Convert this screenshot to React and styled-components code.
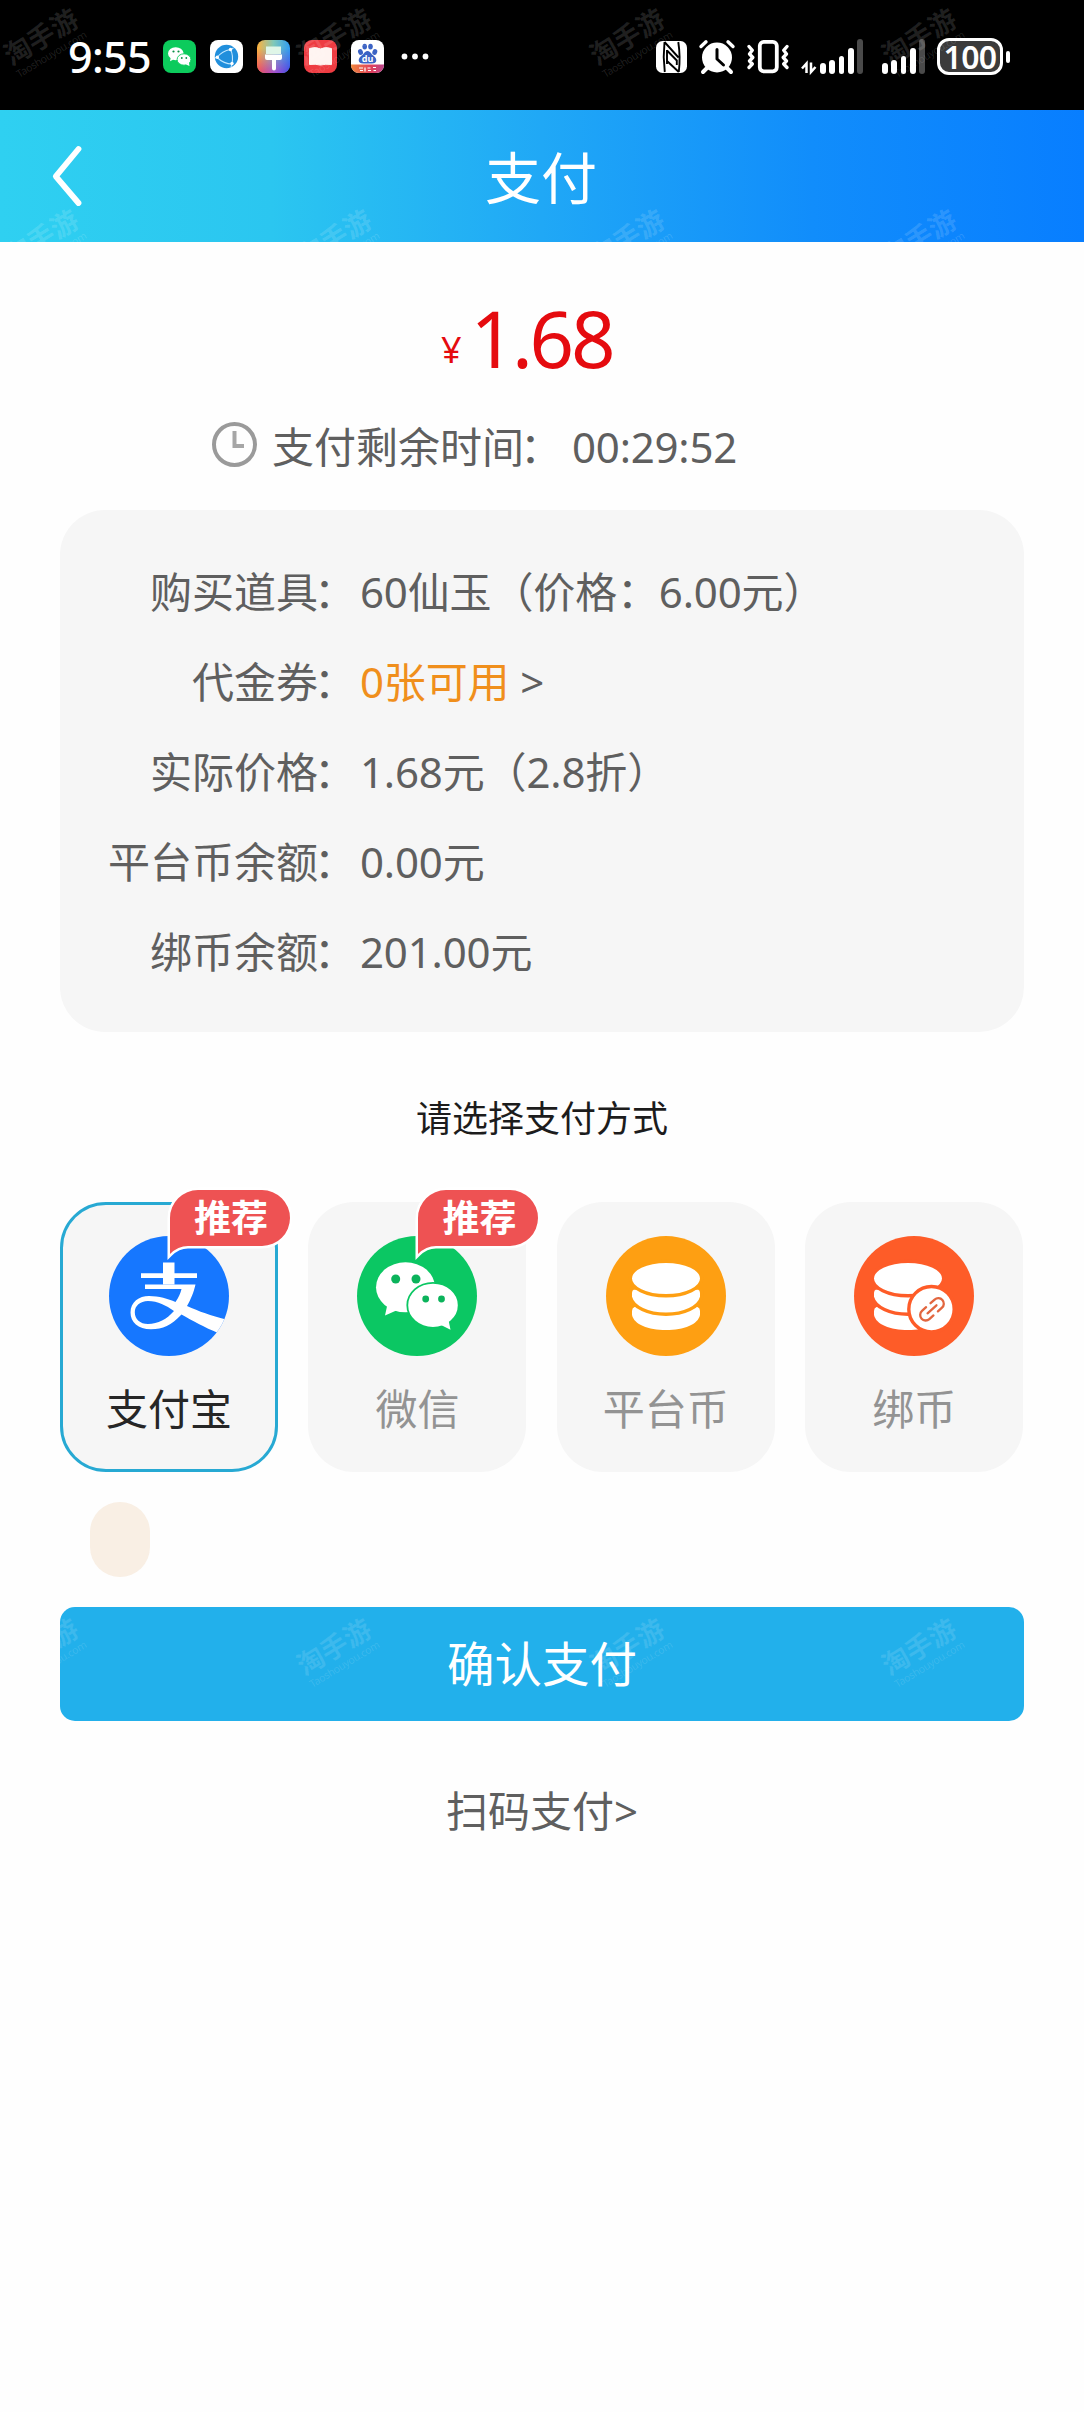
import React from 'react';
import styled, { createGlobalStyle } from 'styled-components';

const GlobalStyle = createGlobalStyle`
  *, *::before, *::after { box-sizing: border-box; }
  body { margin: 0; background: #fefefe; }
`;

const Page = styled.div`
  position: relative;
  width: 1084px;
  height: 2412px;
  overflow: hidden;
  background: #fefefe;
  font-family: 'Noto Sans', 'Noto Sans CJK SC', sans-serif;
  color: #5f5f5f;
`;

/* ---------- status bar ---------- */

const StatusBar = styled.header`
  display: flex;
  align-items: center;
  justify-content: space-between;
  height: 110px;
  padding: 3px 74px 0 68px;
  background: #000;
  color: #fff;
`;

const StatusGroup = styled.div`
  display: flex;
  align-items: center;
`;

const Time = styled.span`
  width: 95px;
  font-size: 43px;
  line-height: 50px;
  font-weight: 500;
  letter-spacing: -0.6px;
`;

const AppIcons = styled.div`
  display: flex;
  gap: 14px;
  margin-right: 17px;
`;

const Glyph = styled.svg`
  display: block;
  flex: none;
  width: ${(p) => p.$w}px;
  height: ${(p) => p.$h}px;
  margin-left: ${(p) => p.$ml || 0}px;
  overflow: visible;
`;

const Bars = styled.div`
  display: flex;
  align-items: flex-end;
  gap: 3.4px;
  height: 35px;
  margin-left: ${(p) => p.$ml}px;
`;

const Bar = styled.i`
  width: 5.9px;
  height: ${(p) => p.$h}px;
  border-radius: 3px;
  background: ${(p) => (p.$dim ? '#4a4a4a' : '#fff')};
`;

const Battery = styled.div`
  display: flex;
  align-items: center;
  justify-content: center;
  width: 66px;
  height: 37px;
  margin-left: 12px;
  border: 3px solid #fff;
  border-radius: 12px;
  background: #3b3b3b;
  font-size: 32px;
  line-height: 31px;
  font-weight: 600;
  letter-spacing: -0.6px;
`;

const BatteryTip = styled.i`
  width: 4px;
  height: 12px;
  margin-left: 3px;
  border-radius: 2px;
  background: #fff;
`;

/* ---------- title bar ---------- */

const TitleBar = styled.div`
  display: grid;
  grid-template-columns: 120px 1fr 120px;
  align-items: center;
  height: 132px;
  background: linear-gradient(90deg, #2fd0f1 0%, #2bc6f0 25%, #20a8f6 50%, #118dfb 75%, #087eff 100%);
`;

const Title = styled.h1`
  margin: 0 2px 0 0;
  text-align: center;
  color: #fff;
  font-size: 56px;
  line-height: 80px;
  font-weight: 400;
  padding-top: 1px;
`;

/* ---------- content ---------- */

const Content = styled.main`
  display: flex;
  flex-direction: column;
  padding: 46px 60px 0;
`;

const Price = styled.div`
  display: flex;
  align-items: flex-end;
  height: 100px;
  padding-left: 381px;
  color: #e50b0f;
`;

const Currency = styled.span`
  width: 29.5px;
  font-size: 36px;
  line-height: 76px;
`;

const Amount = styled.span`
  font-size: 78px;
  line-height: 100px;
  letter-spacing: -3.2px;
`;

const Countdown = styled.div`
  display: flex;
  align-items: center;
  height: 60px;
  margin-top: 29px;
  padding-left: 152px;
  font-size: 42px;
  line-height: 60px;
`;

const CountdownLabel = styled.span`
  margin-left: 14px;
  width: 300px;
`;

const CountdownValue = styled.span`
  letter-spacing: -0.2px;
`;

const Colon = styled.span`
  margin: 0 4px 0 -4px;
`;

const Details = styled.dl`
  margin: 33px 0 0;
  height: 522px;
  padding: 37px 0 0;
  border-radius: 45px;
  background: #f6f6f6;
`;

const DetailRow = styled.div`
  display: grid;
  grid-template-columns: 300px 1fr;
  height: 90px;
  font-size: 42px;
  line-height: 89px;
`;

const DetailLabel = styled.dt`
  text-align: right;
  white-space: nowrap;
`;

const DetailValue = styled.dd`
  margin: 0;
  letter-spacing: -0.15px;
`;

const Coupon = styled.span`
  color: #f08f1c;
`;

const SectionTitle = styled.h2`
  margin: 57px 0 53px;
  text-align: center;
  color: #1c1c1c;
  font-size: 36px;
  line-height: 60px;
  font-weight: 400;
`;

const Methods = styled.div`
  display: grid;
  grid-template-columns: repeat(4, 218px);
  column-gap: 30.4px;
`;

const Method = styled.button`
  position: relative;
  display: flex;
  flex-direction: column;
  align-items: center;
  height: 270px;
  padding: ${(p) => (p.$active ? '31px' : '34px')} 0 0;
  border: ${(p) => (p.$active ? '3px solid #27a9d3' : '0')};
  border-radius: 46px;
  background: #f6f6f6;
  color: ${(p) => (p.$active ? '#262626' : '#939393')};
  font-family: inherit;
  font-size: 42px;
  line-height: 60px;
`;

const MethodName = styled.span`
  margin-top: 23px;
`;

const Badge = styled.span`
  position: absolute;
  left: ${(p) => (p.$active ? 107 : 110)}px;
  top: ${(p) => (p.$active ? -15 : -12)}px;
  width: 120px;
  height: 56px;
  padding-left: 2px;
  text-align: center;
  color: #fff;
  font-size: 37px;
  line-height: 55px;
  font-weight: 700;
`;

const BadgeShape = styled.svg`
  position: absolute;
  left: 0;
  top: 0;
  width: 120px;
  height: 64px;
  overflow: visible;
`;

const BadgeText = styled.span`
  position: relative;
`;

const Dot = styled.div`
  width: 60px;
  height: 75px;
  margin: 30px 0 30px 30px;
  border-radius: 30px;
  background: #f9efe4;
`;

const Confirm = styled.button`
  height: 114px;
  padding: 0;
  border: 0;
  border-radius: 15px;
  background: #22b0eb;
  color: #fff;
  font-family: inherit;
  font-size: 47.5px;
  line-height: 114px;
`;

const ScanLink = styled.a`
  margin-top: 60px;
  text-align: center;
  font-size: 42px;
  line-height: 60px;
`;

/* ---------- watermark overlay ---------- */

const Mark = styled.div`
  position: absolute;
  left: ${(p) => p.$x}px;
  top: ${(p) => p.$y}px;
  width: 84px;
  transform: rotate(-31deg);
  color: rgba(255, 255, 255, ${(p) => p.$o});
  text-align: center;
  white-space: nowrap;
  pointer-events: none;
`;

const MarkName = styled.div`
  font-size: 27px;
  line-height: 29px;
  font-weight: 700;
`;

const MarkSite = styled.div`
  font-size: 10.5px;
  line-height: 13px;
  letter-spacing: -0.3px;
`;

const WATERMARK_ROWS = [
  { y: 21, o: 0.13 },
  { y: 222, o: 0.14 },
  { y: 1631, o: 0.12 },
];
const WATERMARK_COLS = [2, 295, 588, 880];

/* ---------- drawings ---------- */

const ChatApp = () => (
  <Glyph $w={33} $h={33} viewBox="0 0 33 33">
    <rect width="33" height="33" rx="8" fill="#0ccb5c" />
    <path d="M5 13.5a7.8 6.5 0 1 1 9 6.6q-2.500.2-4-.4L7 21.300l.6-3Q5 16.500 5 13.500z" fill="#fff" />
    <ellipse cx="21" cy="19.500" rx="6.900" ry="5.700" fill="#fff" stroke="#0ccb5c" strokeWidth=".9" />
    <path d="M23 24.500l3.500 1.500-.6-3.500z" fill="#fff" />
    <g fill="#0b8f45"><circle cx="10.500" cy="11.500" r="1.100" /><circle cx="15.500" cy="11.500" r="1.100" /><circle cx="18.800" cy="18" r=".9" /><circle cx="23.300" cy="18" r=".9" /></g>
  </Glyph>
);

const BrowserApp = () => (
  <Glyph $w={33} $h={33} viewBox="0 0 33 33">
    <rect width="33" height="33" rx="8" fill="#fff" />
    <circle cx="16.500" cy="16.500" r="11.700" fill="#218fdc" />
    <path d="M7 17.500Q12 11 20.500 9.500Q23.500 15 22 24Q14 24 7 17.500M20.500 9.500l3-1.500M22 24l-1 3M7 17.500l-2 .5" fill="none" stroke="#bfe6ff" strokeWidth="1.100" />
    <g fill="#fff"><circle cx="7.300" cy="17.300" r="1.700" /><circle cx="20.500" cy="9.500" r="1.700" /><circle cx="22" cy="23.500" r="1.700" /></g>
  </Glyph>
);

const ThemeApp = () => (
  <Glyph $w={33} $h={33} viewBox="0 0 33 33">
    <defs>
      <linearGradient id="themeA" x1="0" y1="0" x2="1" y2="0">
        <stop offset="0" stopColor="#ffb13c" /><stop offset=".5" stopColor="#7fc9b9" /><stop offset="1" stopColor="#2f9cf2" />
      </linearGradient>
      <linearGradient id="themeB" x1="0" y1="0" x2="1" y2="0">
        <stop offset="0" stopColor="#f5485a" /><stop offset=".55" stopColor="#a24fd0" /><stop offset="1" stopColor="#4a45e6" />
      </linearGradient>
      <linearGradient id="themeFade" x1="0" y1="0" x2="0" y2="1">
        <stop offset=".25" stopColor="#000" /><stop offset="1" stopColor="#fff" />
      </linearGradient>
      <mask id="themeMask"><rect width="33" height="33" fill="url(#themeFade)" /></mask>
    </defs>
    <rect width="33" height="33" rx="8" fill="url(#themeA)" />
    <rect width="33" height="33" rx="8" fill="url(#themeB)" mask="url(#themeMask)" />
    <path d="M9 6.500h15v7.500H9z" fill="#dff6e8" />
    <path d="M8 14.500h17v3.500q0 2-2 2h-4v8.500a2 2 0 0 1-4 0V20h-5q-2 0-2-2z" fill="#fff" />
  </Glyph>
);

const ReaderApp = () => (
  <Glyph $w={33} $h={33} viewBox="0 0 33 33">
    <rect width="33" height="33" rx="8" fill="#ee3c42" />
    <path d="M5.500 8.500q6-2 11 .4q5-2.400 11-.4v16q-6-.8-11 .6q-5-1.400-11-.6z" fill="#fff4f1" stroke="#fff4f1" strokeWidth="1" strokeLinejoin="round" />
  </Glyph>
);

const SearchApp = () => (
  <Glyph $w={33} $h={33} viewBox="0 0 33 33">
    <defs>
      <clipPath id="searchClip"><rect width="33" height="33" rx="8" /></clipPath>
      <linearGradient id="searchBand"><stop offset="0" stopColor="#f0873e" /><stop offset=".6" stopColor="#e0405a" /><stop offset="1" stopColor="#bb448d" /></linearGradient>
    </defs>
    <g clipPath="url(#searchClip)">
      <rect width="33" height="33" fill="#fff" />
      <rect y="24.500" width="33" height="8.500" fill="url(#searchBand)" />
    </g>
    <g fill="#3b63c4">
      <ellipse cx="9.500" cy="12" rx="2.400" ry="3" transform="rotate(-20 9.500 12)" />
      <ellipse cx="13.700" cy="6.600" rx="2.300" ry="2.900" />
      <ellipse cx="19.500" cy="6.600" rx="2.300" ry="2.900" />
      <ellipse cx="23.800" cy="12" rx="2.400" ry="3" transform="rotate(20 23.800 12)" />
      <path d="M16.500 11q2.500 0 4.500 3.500q4.500 3 4.300 6q-.3 3-4.500 3h-8.600q-4.200 0-4.500-3q-.2-3 4.300-6q2-3.500 4.500-3.500z" />
    </g>
    <text x="16.500" y="22" fill="#fff" fontSize="9" fontWeight="700" textAnchor="middle">du</text>
    <path d="M8 28h4M9 30.500h3M14 27.500v4M16.500 28h3M17 30.500h3M22 27.500h3M22.500 30.500h2.500" stroke="#fff" strokeWidth="1.200" />
  </Glyph>
);

const More = () => (
  <Glyph $w={28} $h={8} viewBox="0 0 28 8">
    <g fill="#fff"><circle cx="3.500" cy="3.500" r="2.900" /><circle cx="14" cy="3.500" r="2.900" /><circle cx="24.500" cy="3.500" r="2.900" /></g>
  </Glyph>
);

const Nfc = () => (
  <Glyph $w={31} $h={32} viewBox="0 0 31 32">
    <rect width="31" height="32" rx="6.500" fill="#fff" />
    <path d="M8.500 1Q6.800 16 8.800 31M8.500 1L22.500 16.500M22.300 1Q24.600 16 22.800 31M22.800 31L10.500 19.500M11 9v14M11 9.500L20.800 19.500V24" fill="none" stroke="#000" strokeWidth="1.900" />
  </Glyph>
);

const Alarm = () => (
  <Glyph $w={36} $h={33} $ml={12} viewBox="0 0 36 33">
    <circle cx="18" cy="17.500" r="15" fill="#fff" />
    <path d="M8 28l-4 4M28 28l4 4" stroke="#fff" strokeWidth="4" strokeLinecap="round" />
    <path d="M2 6.500L7 1.800M34 6.500L29 1.800" stroke="#fff" strokeWidth="3.400" strokeLinecap="round" />
    <path d="M18 9.500v9.500l6.500 6" fill="none" stroke="#000" strokeWidth="3" strokeLinecap="round" strokeLinejoin="round" />
  </Glyph>
);

const Vibrate = () => (
  <Glyph $w={42} $h={33} $ml={12} viewBox="0 0 42 33">
    <rect x="12.800" y="1.800" width="17" height="29.500" rx="4" fill="none" stroke="#fff" strokeWidth="3.800" />
    <path d="M2 6.500l3.300 3.800L2.500 14l3.300 3.500L2.500 21l2.800 3L2 27.500M40 6.500l-3.300 3.800 2.800 3.700-3.300 3.500 3.300 3.500-2.800 3 3.300 3.500" fill="none" stroke="#fff" strokeWidth="3.300" strokeLinecap="round" strokeLinejoin="round" />
  </Glyph>
);

const DataArrows = () => (
  <Glyph $w={16} $h={35} $ml={12} viewBox="0 0 16 35">
    <path d="M5.500 34V24.500L1 29.500M10 23.500V33l4.500-5" fill="none" stroke="#fff" strokeWidth="2.500" />
  </Glyph>
);

const Signal = ({ ml }) => (
  <Bars $ml={ml}>
    {[11, 14.5, 18.5, 26].map((h) => <Bar key={h} $h={h} />)}
    <Bar $h={35} $dim />
  </Bars>
);

const BackIcon = () => (
  <Glyph $w={28} $h={60} $ml={52} viewBox="0 0 28 60">
    <path d="M26.500 3L3.800 30.300L26.500 57" fill="none" stroke="#fff" strokeWidth="5.800" strokeLinecap="round" strokeLinejoin="round" />
  </Glyph>
);

const ClockIcon = () => (
  <Glyph $w={46} $h={50} viewBox="0 0 46 50">
    <circle cx="22.500" cy="22.500" r="20.500" fill="none" stroke="#9a9a9a" strokeWidth="4" />
    <path d="M22.500 9v15h9.500" fill="none" stroke="#a6a6a6" strokeWidth="4" />
  </Glyph>
);

const AlipayIcon = () => (
  <Glyph $w={120} $h={120} viewBox="0 0 120 120">
    <defs><clipPath id="aliClip"><circle cx="60" cy="60" r="60" /></clipPath></defs>
    <circle cx="60" cy="60" r="60" fill="#1677ff" />
    <g fill="#fff" clipPath="url(#aliClip)">
      <path d="M54 26.500h11.500V37.300H88v4.700H65.500v6.500H54V42H32v-4.700h22z" />
      <path fillRule="evenodd" d="M36 48.500H86.500C84.500 57 82 63 78 70C90 75.500 102 79.500 117 83.500L109 97C96 91.500 83 84.500 72.500 78.500C62 89.500 54 93.300 42 93.300C29 93.300 21.500 86 21.500 76.500C21.500 66 30 60 40 60C50 60 59 62.800 66.500 66C69.500 62 71.500 57 72.500 53H36ZM65 75C57 69.500 49 65 39 65C31 65 25.800 70 25.800 76.200C25.800 83 31 88 39 88C49 88 58 83 65 75Z" />
    </g>
  </Glyph>
);

const WechatIcon = () => (
  <Glyph $w={120} $h={120} viewBox="0 0 120 120">
    <circle cx="60" cy="60" r="60" fill="#0bc763" />
    <ellipse cx="48.500" cy="51.300" rx="29.500" ry="25" fill="#fff" />
    <path d="M30.500 68L28 79.500L40.500 74z" fill="#fff" />
    <ellipse cx="76" cy="69.300" rx="25.700" ry="22.500" fill="#fff" stroke="#0bc763" strokeWidth="1.800" />
    <path d="M84 89L93.500 93.800L91.500 84z" fill="#fff" />
    <g fill="#0bb35b">
      <circle cx="38.700" cy="43" r="4.500" /><circle cx="59" cy="43" r="4.500" />
      <circle cx="68.700" cy="63" r="3.400" /><circle cx="84.500" cy="63" r="3.400" />
    </g>
  </Glyph>
);

const CoinStack = ({ x, gap }) => (
  <g fill="#fff" transform={`translate(${x} 0)`}>
    <path d="M0 75Q0 72 2.500 71H65.500Q68 72 68 75V79C66 88.500 52 94 34 94S2 88.500 0 79Z" />
    <path d="M-1.700 57Q-1.700 53 1.500 52H66.500Q69.700 53 69.700 57V61C67 71.500 52 78.300 34 78.300S1 71.500 -1.700 61Z" stroke={gap} strokeWidth="3.400" />
    <ellipse cx="34" cy="42.500" rx="35.700" ry="17.300" stroke={gap} strokeWidth="3.400" />
  </g>
);

const CoinIcon = () => (
  <Glyph $w={120} $h={120} viewBox="0 0 120 120">
    <circle cx="60" cy="60" r="60" fill="#fe9f12" />
    <CoinStack x={26} gap="#fe9f12" />
  </Glyph>
);

const BoundCoinIcon = () => (
  <Glyph $w={120} $h={120} viewBox="0 0 120 120">
    <circle cx="60" cy="60" r="60" fill="#fe5c28" />
    <CoinStack x={20} gap="#fe5c28" />
    <circle cx="77.500" cy="73.200" r="22.700" fill="#fff" stroke="#fe5c28" strokeWidth="3.400" />
    <g transform="translate(78 73.300) rotate(-42)" fill="none" stroke="#e2663f" strokeWidth="2.300" strokeLinecap="round">
      <path d="M-3 -5.500H-8.500A5.500 5.500 0 0 0-8.500 5.500H-3M3 -5.500H8.500A5.500 5.500 0 0 1 8.500 5.500H3M-6 0H6" />
    </g>
  </Glyph>
);

const Recommend = ({ active }) => (
  <Badge $active={active}>
    <BadgeShape viewBox="0 0 120 64">
      <path d="M0 64V28A28 28 0 0 1 28 0H92A28 28 0 0 1 92 56H18Q8 56 0 64Z" fill="#ee5253" stroke="#fff" strokeWidth="5" paintOrder="stroke" />
    </BadgeShape>
    <BadgeText>推荐</BadgeText>
  </Badge>
);

const details = [
  { label: '购买道具', value: '60仙玉（价格：6.00元）' },
  { label: '代金券', value: <><Coupon>0张可用</Coupon> &gt;</> },
  { label: '实际价格', value: '1.68元（2.8折）' },
  { label: '平台币余额', value: '0.00元' },
  { label: '绑币余额', value: '201.00元' },
];

const methods = [
  { name: '支付宝', Icon: AlipayIcon, active: true, recommended: true },
  { name: '微信', Icon: WechatIcon, recommended: true },
  { name: '平台币', Icon: CoinIcon },
  { name: '绑币', Icon: BoundCoinIcon },
];

export default function App() {
  return (
    <Page>
      <GlobalStyle />
      <StatusBar>
        <StatusGroup>
          <Time>9:55</Time>
          <AppIcons>
            <ChatApp />
            <BrowserApp />
            <ThemeApp />
            <ReaderApp />
            <SearchApp />
          </AppIcons>
          <More />
        </StatusGroup>
        <StatusGroup>
          <Nfc />
          <Alarm />
          <Vibrate />
          <DataArrows />
          <Signal ml={3} />
          <Signal ml={19} />
          <Battery>100</Battery>
          <BatteryTip />
        </StatusGroup>
      </StatusBar>
      <TitleBar>
        <BackIcon />
        <Title>支付</Title>
      </TitleBar>
      <Content>
        <Price>
          <Currency>¥</Currency>
          <Amount>1.68</Amount>
        </Price>
        <Countdown>
          <ClockIcon />
          <CountdownLabel>支付剩余时间<Colon>：</Colon></CountdownLabel>
          <CountdownValue>00:29:52</CountdownValue>
        </Countdown>
        <Details>
          {details.map((d) => (
            <DetailRow key={d.label}>
              <DetailLabel>{d.label}<Colon>：</Colon></DetailLabel>
              <DetailValue>{d.value}</DetailValue>
            </DetailRow>
          ))}
        </Details>
        <SectionTitle>请选择支付方式</SectionTitle>
        <Methods>
          {methods.map(({ name, Icon, active, recommended }) => (
            <Method key={name} $active={active}>
              <Icon />
              <MethodName>{name}</MethodName>
              {recommended && <Recommend active={active} />}
            </Method>
          ))}
        </Methods>
        <Dot />
        <Confirm>确认支付</Confirm>
        <ScanLink>扫码支付&gt;</ScanLink>
      </Content>
      {WATERMARK_ROWS.map((row) =>
        WATERMARK_COLS.map((x) => (
          <Mark key={`${row.y}-${x}`} $x={x} $y={row.y} $o={row.o} aria-hidden="true">
            <MarkName>淘手游</MarkName>
            <MarkSite>Taoshouyou.com</MarkSite>
          </Mark>
        ))
      )}
    </Page>
  );
}
